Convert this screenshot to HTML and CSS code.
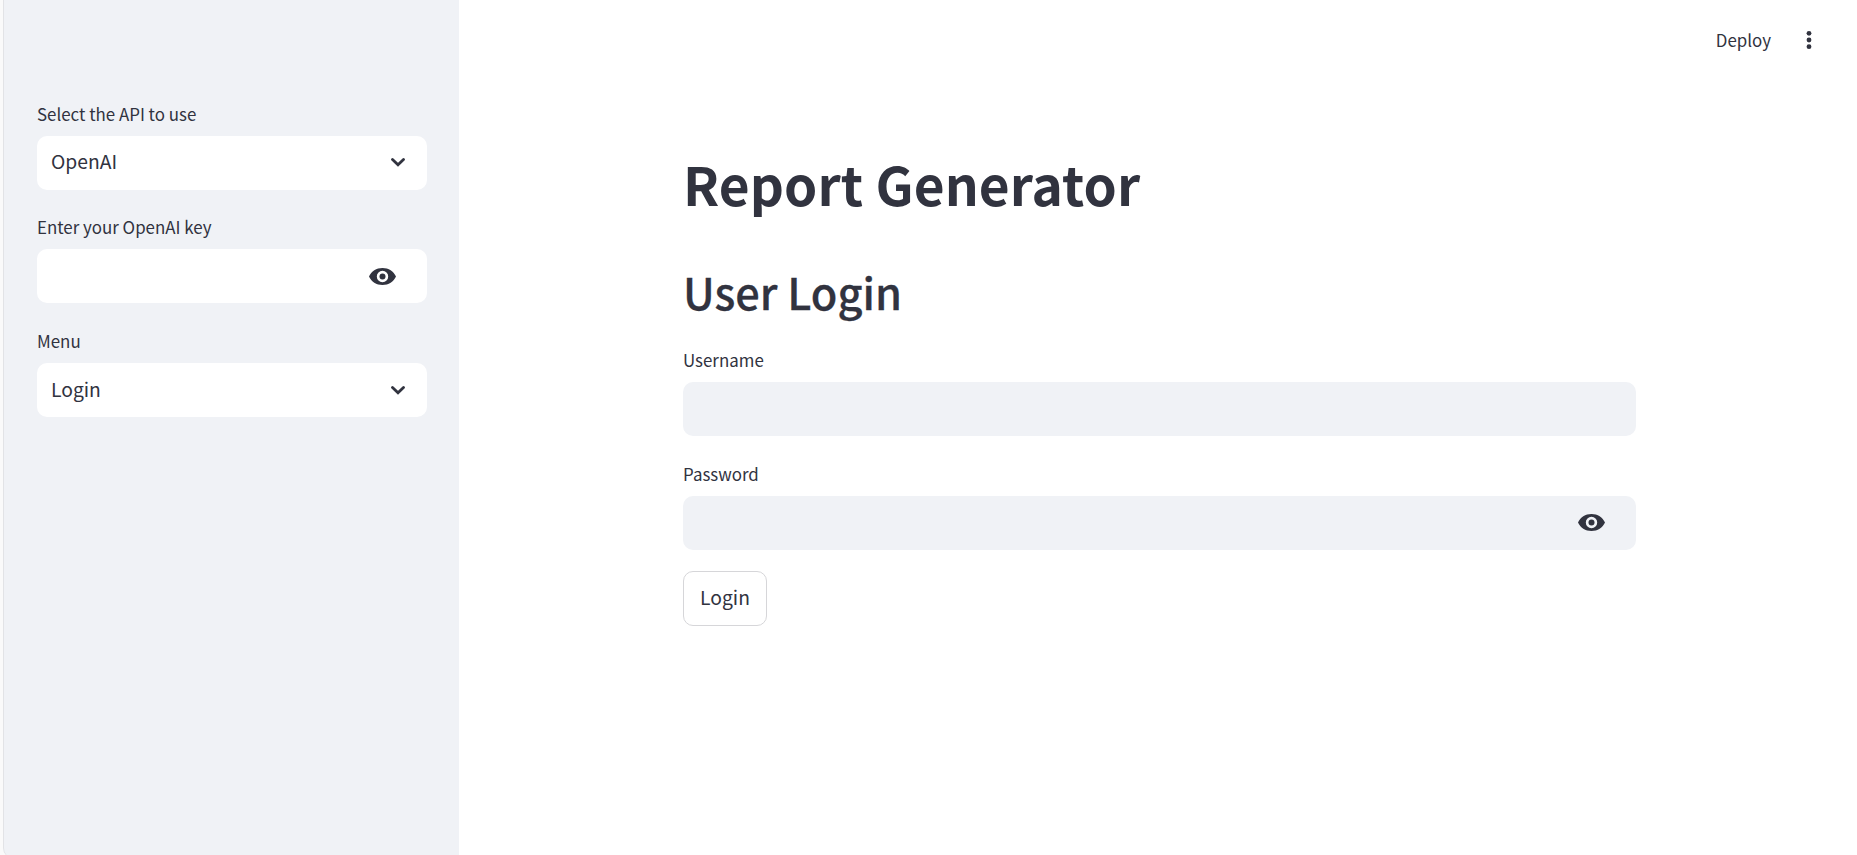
FILE: index.html
```html
<!DOCTYPE html>
<html lang="en">
<head>
<meta charset="utf-8">
<title>Report Generator</title>
<link rel="stylesheet" href="styles.css">
</head>
<body>
<svg class="defs" aria-hidden="true">
  <symbol id="eye" viewBox="0 0 27 17"><path fill-rule="evenodd" d="M0 8.5C2.3 3.4 7.4 0 13.5 0S24.7 3.4 27 8.5C24.7 13.6 19.600 17 13.500 17S2.300 13.600 0 8.500zM13.500 2.800a5.700 5.700 0 1 0 0 11.400 5.700 5.700 0 0 0 0-11.400z"/><circle cx="13.5" cy="8.5" r="3"/></symbol>
  <symbol id="chevron" viewBox="0 0 14 9"><path d="M1.5 1.5 7 6.8 12.5 1.5" fill="none" stroke="currentColor" stroke-width="2.8" stroke-linecap="round"/></symbol>
</svg>
<div class="app">
  <aside class="sidebar">
    <div class="field">
      <label class="label">Select the API to use</label>
      <div class="control control-api"><span class="value">OpenAI</span><svg class="chevron"><use href="#chevron"/></svg></div>
    </div>
    <div class="field">
      <label class="label">Enter your OpenAI key</label>
      <div class="control"><svg class="eye"><use href="#eye"/></svg></div>
    </div>
    <div class="field">
      <label class="label">Menu</label>
      <div class="control"><span class="value">Login</span><svg class="chevron"><use href="#chevron"/></svg></div>
    </div>
  </aside>
  <main class="main">
    <header class="toolbar">
      <span class="deploy">Deploy</span>
      <svg class="dots" viewBox="0 0 6 20"><circle cx="3" cy="3.3" r="2.4"/><circle cx="3" cy="10" r="2.4"/><circle cx="3" cy="16.7" r="2.4"/></svg>
    </header>
    <section class="content">
      <h1 class="title">Report Generator</h1>
      <h2 class="subtitle">User Login</h2>
      <div class="field">
        <label class="label">Username</label>
        <div class="control"></div>
      </div>
      <div class="field">
        <label class="label">Password</label>
        <div class="control"><svg class="eye"><use href="#eye"/></svg></div>
      </div>
      <button class="button">Login</button>
    </section>
  </main>
</div>
</body>
</html>
```
FILE: styles.css
```css
* { box-sizing: border-box; }
html, body { height: 855px; overflow: hidden; }
body {
  margin: 0;
  background: #fff;
  color: #31333f;
  font-family: "Noto Sans CJK SC", "Noto Sans", sans-serif;
}
.defs { display: none; }
svg { fill: currentColor; flex: none; }
.app {
  display: flex;
  height: 858px;
  padding-left: 3px;
  background: #fafafa;
}
.sidebar {
  width: 456px;
  padding: 99px 32px 0 33px;
  background: #f0f2f6;
  border-left: 1px solid #e2e3e6;
  border-bottom-left-radius: 10px;
}
.main { flex: 1; background: #fff; }
.label {
  display: block;
  height: 30px;
  font-size: 16.9px;
  line-height: 30px;
}
.control {
  display: flex;
  align-items: center;
  height: 54px;
  margin-top: 7px;
  padding: 0 22px 0 14px;
  border-radius: 10px;
  background: #fff;
}
.control-api { padding-bottom: 2px; }
.sidebar .field { margin-bottom: 22px; }
.sidebar .field:nth-child(2) { margin-bottom: 23px; }
.value { padding-bottom: 2px; font-size: 19.3px; line-height: 30px; }
.chevron { width: 14px; height: 9px; margin-left: auto; }
.eye { width: 27px; height: 17px; margin: 0 9px 0 auto; }
.content .eye { margin-bottom: 2px; }
.toolbar {
  display: flex;
  justify-content: flex-end;
  align-items: center;
  height: 80px;
  padding-right: 45.5px;
}
.deploy { margin-right: 34.5px; font-size: 16.9px; line-height: 30px; }
.dots { width: 6px; height: 20px; }
.content { width: 953px; margin: 63px 0 0 224px; }
.title {
  margin: 0 0 38px;
  font-size: 53.2px;
  line-height: 80px;
  font-weight: 700;
  letter-spacing: 0.1px;
}
.subtitle {
  margin: 0 0 24px;
  font-size: 43.3px;
  line-height: 60px;
  font-weight: 500;
  -webkit-text-stroke: 0.3px currentColor;
}
.content .field { margin-bottom: 23px; }
.content .control { background: #f0f2f6; }
.content .field:nth-of-type(2) { margin-bottom: 21px; }
.button {
  width: 84px;
  height: 55px;
  padding: 0 0 3px;
  border: 1px solid #d6d6d9;
  border-radius: 10px;
  background: #fff;
  color: inherit;
  font: 19.3px/30px "Noto Sans CJK SC", sans-serif;
}
```
